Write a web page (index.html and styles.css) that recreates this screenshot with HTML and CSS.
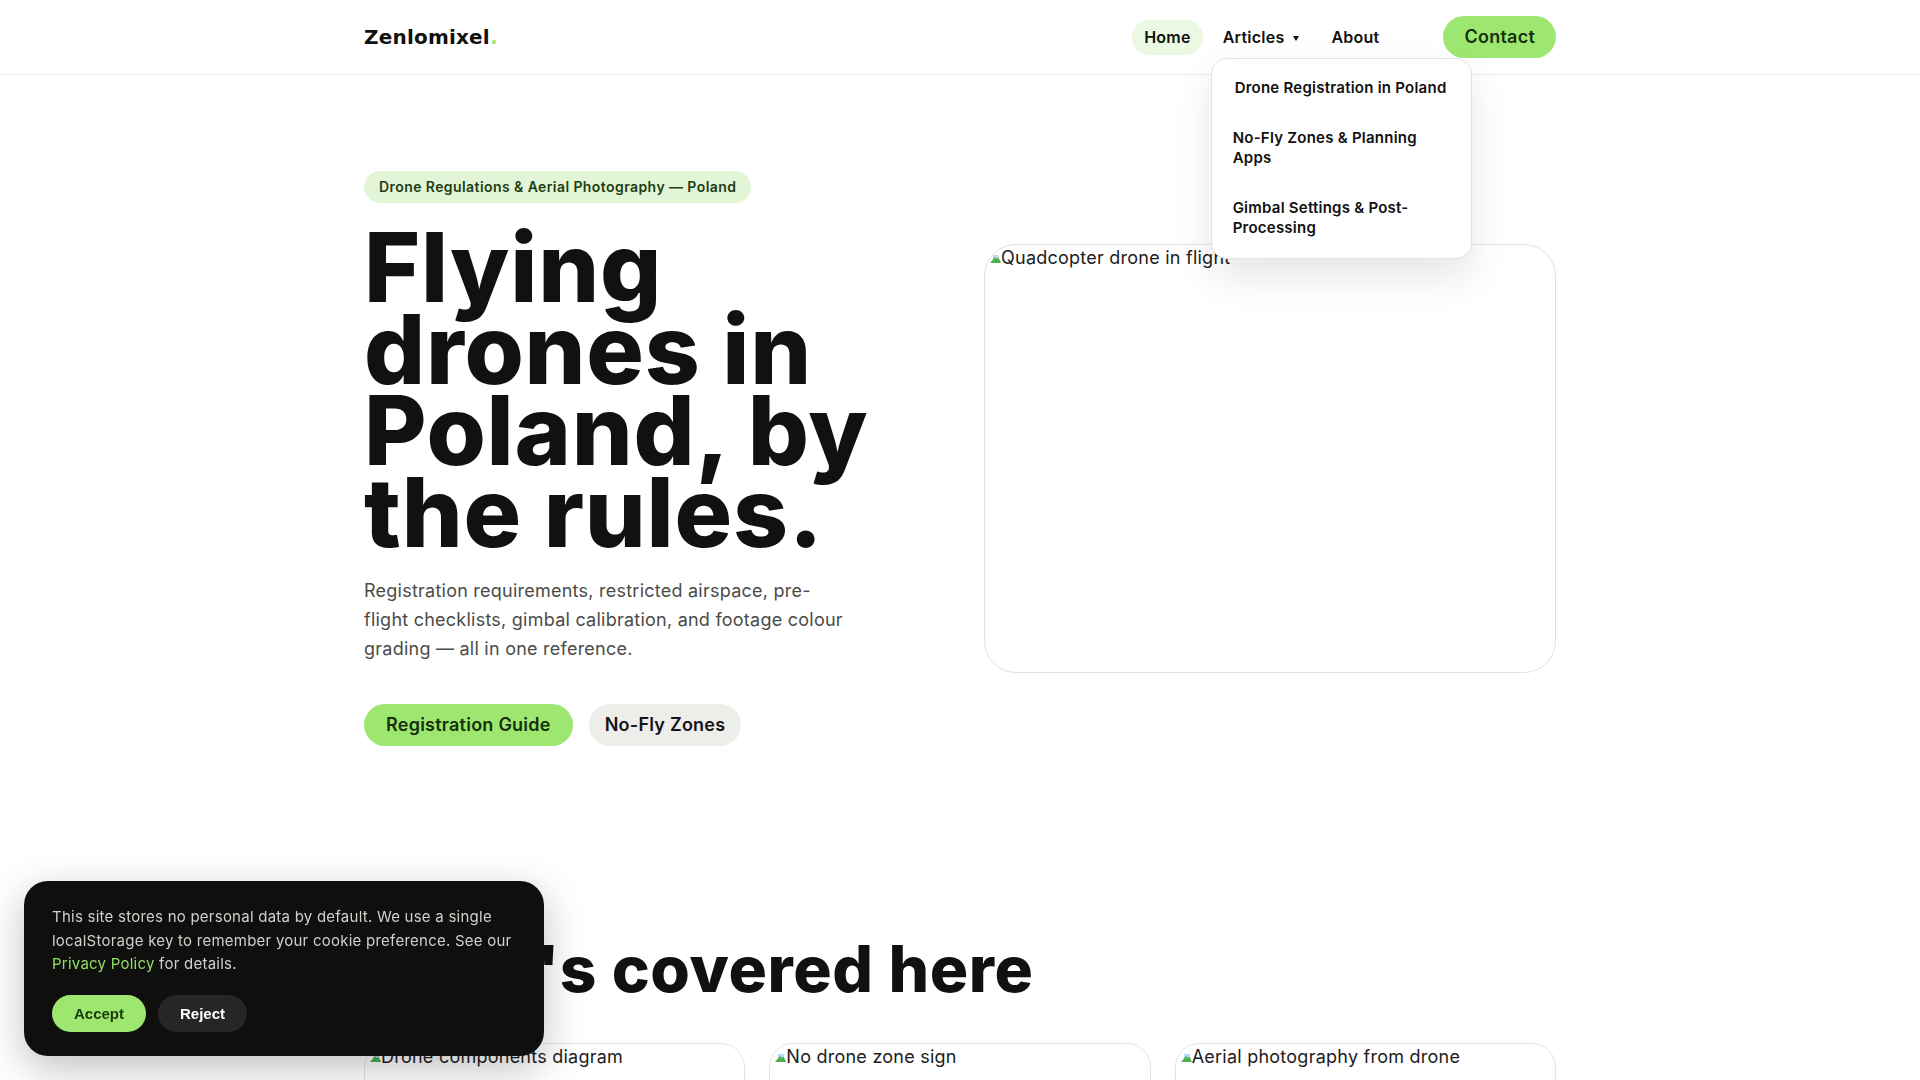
FILE: index.html
```html
<!DOCTYPE html>
<html lang="en">
<head>
    <meta charset="UTF-8">
    <meta name="viewport" content="width=device-width, initial-scale=1.0">
    <title>Zenlomixel — Drone Regulations &amp; Aerial Photography in Poland</title>
    <link rel="stylesheet" href="styles.css">
</head>
<body>
    <header class="site-header">
        <div class="wrap nav-row">
            <a href="#" class="logo">Zenlomixel<span class="logo-dot">.</span></a>
            <nav class="main-nav">
                <ul class="nav-list">
                    <li><a href="#" class="nav-link active">Home</a></li>
                    <li class="has-drop">
                        <a href="#" class="nav-link">Articles<span class="caret"></span></a>
                        <ul class="dropdown">
                            <li><a href="#" class="hovered">Drone Registration in Poland</a></li>
                            <li><a href="#">No-Fly Zones &amp; Planning Apps</a></li>
                            <li><a href="#">Gimbal Settings &amp; Post-Processing</a></li>
                        </ul>
                    </li>
                    <li><a href="#" class="nav-link">About</a></li>
                </ul>
                <a href="#" class="btn-contact">Contact</a>
            </nav>
        </div>
    </header>

    <main>
        <section class="wrap hero">
            <div class="hero-copy">
                <span class="badge">Drone Regulations &amp; Aerial Photography — Poland</span>
                <h1 class="hero-title">Flying drones in Poland, by the rules.</h1>
                <p class="hero-lead">Registration requirements, restricted airspace, pre-flight checklists, gimbal calibration, and footage colour grading — all in one reference.</p>
                <div class="hero-actions">
                    <a href="#" class="btn btn-primary">Registration Guide</a>
                    <a href="#" class="btn btn-secondary">No-Fly Zones</a>
                </div>
            </div>
            <div class="hero-media">
                <span class="alt-text"><svg class="broken-ic" viewBox="0 0 16 16" width="16" height="16"><rect x="8" y="7" width="6" height="4" fill="#b7dcf2"/><path d="M5 15l5-6 2 2 1.5-1.5 2.5 5.5z" fill="#4caf50"/></svg>Quadcopter drone in flight</span>
            </div>
        </section>

        <section class="wrap covered">
            <h2 class="section-title">What's covered here</h2>
            <div class="card-grid">
                <article class="card">
                    <span class="alt-text"><svg class="broken-ic" viewBox="0 0 16 16" width="16" height="16"><rect x="8" y="7" width="6" height="4" fill="#b7dcf2"/><path d="M5 15l5-6 2 2 1.5-1.5 2.5 5.5z" fill="#4caf50"/></svg>Drone components diagram</span>
                </article>
                <article class="card">
                    <span class="alt-text"><svg class="broken-ic" viewBox="0 0 16 16" width="16" height="16"><rect x="8" y="7" width="6" height="4" fill="#b7dcf2"/><path d="M5 15l5-6 2 2 1.5-1.5 2.5 5.5z" fill="#4caf50"/></svg>No drone zone sign</span>
                </article>
                <article class="card">
                    <span class="alt-text"><svg class="broken-ic" viewBox="0 0 16 16" width="16" height="16"><rect x="8" y="7" width="6" height="4" fill="#b7dcf2"/><path d="M5 15l5-6 2 2 1.5-1.5 2.5 5.5z" fill="#4caf50"/></svg>Aerial photography from drone</span>
                </article>
            </div>
        </section>
    </main>

    <div class="cookie">
        <p>This site stores no personal data by default. We use a single localStorage key to remember your cookie preference. See our <a href="#">Privacy Policy</a> for details.</p>
        <div class="cookie-actions">
            <button class="btn-accept">Accept</button>
            <button class="btn-reject">Reject</button>
        </div>
    </div>
</body>
</html>
```

FILE: styles.css
```css
* {
    box-sizing: border-box;
}
body {
    margin: 0;
    font-family: 'Inter', 'Noto Sans', sans-serif;
    letter-spacing: 0.015em;
    color: #111110;
    background: #fff;
}
a {
    color: inherit;
    text-decoration: none;
}
ul {
    list-style: none;
    margin: 0;
    padding: 0;
}
.wrap {
    max-width: 1192px;
    margin: 0 auto;
}

/* header */
.site-header {
    position: relative;
    z-index: 10;
    background: #fff;
    border-bottom: 1px solid #ececea;
}
.nav-row {
    height: 74px;
    display: flex;
    align-items: center;
    justify-content: space-between;
}
.logo {
    font-family: 'DejaVu Sans', sans-serif;
    font-size: 20px;
    font-weight: 700;
    letter-spacing: 0.01em;
}
.logo-dot {
    color: #9de771;
}
.main-nav {
    display: flex;
    align-items: center;
}
.nav-list {
    display: flex;
    gap: 8px;
}
.nav-list > li {
    position: relative;
}
.nav-link {
    display: block;
    padding: 8px 12px;
    border-radius: 999px;
    font-size: 16px;
    line-height: 19px;
    font-weight: 600;
}
.nav-link.active {
    background: #ebf8e2;
}
.caret {
    display: inline-block;
    width: 0;
    height: 0;
    margin-left: 9px;
    border-left: 3px solid transparent;
    border-right: 3px solid transparent;
    border-top: 5px solid currentColor;
    vertical-align: middle;
}
.btn-contact {
    margin-left: 52px;
    padding: 10px 21px;
    border-radius: 999px;
    font-size: 18px;
    line-height: 22px;
    font-weight: 600;
    color: #15300a;
    background: #9de771;
}
.dropdown {
    position: absolute;
    top: 38px;
    left: 0;
    width: 261px;
    padding: 5px;
    background: #fff;
    border: 1px solid #e3e3e1;
    border-radius: 16px;
    box-shadow: 0 18px 40px rgba(0, 0, 0, 0.1);
}
.dropdown a {
    display: block;
    padding: 14.5px 16px;
    font-size: 15px;
    line-height: 20.5px;
    font-weight: 600;
}
.dropdown a.hovered {
    padding-left: 18px;
}

/* hero */
.hero {
    display: grid;
    grid-template-columns: 1fr 1fr;
    gap: 48px;
    align-items: center;
    padding: 96px 0;
}
.hero-copy {
    display: flex;
    flex-direction: column;
    align-items: flex-start;
}
.badge {
    padding: 7px 15px;
    border-radius: 999px;
    font-size: 14px;
    line-height: 18px;
    font-weight: 600;
    letter-spacing: 0.03em;
    color: #1f3d12;
    background: #e2f5d6;
}
.hero-title {
    margin: 24px 0 0;
    font-size: 96px;
    line-height: 0.85;
    font-weight: 800;
    letter-spacing: 0.008em;
}
.hero-lead {
    margin: 24px 0 0;
    max-width: 484px;
    font-size: 18px;
    line-height: 1.6;
    color: #4b4b48;
}
.hero-actions {
    display: flex;
    gap: 16px;
    margin-top: 40px;
}
.btn {
    padding: 10px 22px;
    border-radius: 999px;
    font-size: 18px;
    line-height: 22px;
    font-weight: 600;
}
.btn-primary {
    color: #15300a;
    background: #9de771;
}
.btn-secondary {
    padding: 10px 16px;
    color: #151515;
    background: #ededea;
}
.hero-media {
    aspect-ratio: 4 / 3;
    border: 1px solid #e2e2e0;
    border-radius: 32px;
    overflow: hidden;
}
.alt-text {
    display: block;
    padding-top: 2px;
    font-size: 18px;
    line-height: 22px;
    color: #1c1c1c;
}
.broken-ic {
    vertical-align: baseline;
}

/* covered */
.covered {
    padding-top: 93px;
}
.section-title {
    margin: 0 0 41px;
    font-size: 64px;
    line-height: 1.05;
    font-weight: 800;
    letter-spacing: 0.01em;
}
.card-grid {
    display: grid;
    grid-template-columns: repeat(3, 1fr);
    gap: 24px;
}
.card {
    min-height: 320px;
    border: 1px solid #e4e4e2;
    border-radius: 24px;
    overflow: hidden;
}

/* cookie banner */
.cookie {
    position: fixed;
    left: 24px;
    bottom: 24px;
    z-index: 50;
    width: 520px;
    padding: 24px 18px 24px 28px;
    color: #cfcfcc;
    background: #0f0f0e;
    border-radius: 24px;
    box-shadow: 0 12px 40px rgba(0, 0, 0, 0.25);
}
.cookie p {
    margin: 0;
    font-size: 15px;
    line-height: 1.55;
}
.cookie a {
    color: #8fe063;
}
.cookie-actions {
    display: flex;
    gap: 12px;
    margin-top: 20px;
}
.cookie button {
    padding: 10px 22px;
    border: none;
    border-radius: 999px;
    font-family: 'Liberation Sans', Arial, sans-serif;
    font-size: 15px;
    line-height: 17px;
    font-weight: 700;
    letter-spacing: 0;
    cursor: pointer;
}
.btn-accept {
    color: #1a3a0c;
    background: #9de771;
}
.btn-reject {
    color: #fff;
    background: #262626;
}
```
